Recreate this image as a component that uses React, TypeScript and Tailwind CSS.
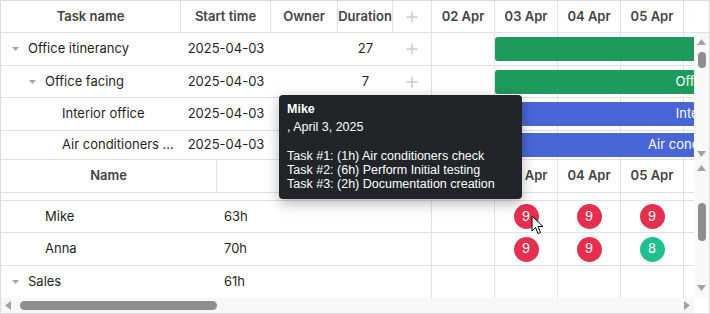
import React from "react";

const line = "border-[#e2e2e2]";

interface TaskRow {
  name: string;
  level: number;
  toggle: boolean;
  start: string;
  duration: string;
  h: string;
  bar: { color: string; width: string; text: string };
}

const tasks: TaskRow[] = [
  { name: "Office itinerancy", level: 0, toggle: true, start: "2025-04-03", duration: "27", h: "h-[33px]", bar: { color: "bg-[#1e9a5c]", width: "w-[1700px]", text: "Office itinerancy" } },
  { name: "Office facing", level: 1, toggle: true, start: "2025-04-03", duration: "7", h: "h-[32px]", bar: { color: "bg-[#1e9a5c]", width: "w-[440px]", text: "Office facing" } },
  { name: "Interior office", level: 2, toggle: false, start: "2025-04-03", duration: "7", h: "h-[33px]", bar: { color: "bg-[#4866d6]", width: "w-[444px]", text: "Interior office" } },
  { name: "Air conditioners ...", level: 2, toggle: false, start: "2025-04-03", duration: "7", h: "h-[29px]", bar: { color: "bg-[#4866d6]", width: "w-[444px]", text: "Air conditioners check" } },
];

const days = ["02 Apr", "03 Apr", "04 Apr", "05 Apr", "06 Apr"];

const Caret = () => (
  <svg width="7" height="4" viewBox="0 0 7 4">
    <polygon points="0,0 7,0 3.5,4" fill="#a6a6a6" />
  </svg>
);

const Plus = () => (
  <svg width="12" height="12" viewBox="0 0 12 12">
    <path d="M6 0.5V11.5M0.5 6H11.5" stroke="#cacaca" strokeWidth="1.5" />
  </svg>
);

const Arrow = ({ dir }: { dir: "up" | "down" | "left" | "right" }) => {
  const pts = {
    up: "0,6 9,6 4.5,0",
    down: "0,0 9,0 4.5,6",
    left: "6,0 6,9 0,4.5",
    right: "0,0 0,9 6,4.5",
  }[dir];
  const vertical = dir === "up" || dir === "down";
  return (
    <svg width={vertical ? 9 : 6} height={vertical ? 6 : 9} viewBox={vertical ? "0 0 9 6" : "0 0 6 9"}>
      <polygon points={pts} fill="#a3a3a3" />
    </svg>
  );
};

const NameCell = ({ level, toggle, text, width }: { level: number; toggle: boolean; text: string; width: string }) => (
  <div className={`${width} h-full flex items-center overflow-hidden whitespace-nowrap`}>
    <div className="shrink-0" style={{ width: 6 + level * 17 }} />
    <div className="w-[16px] shrink-0 flex justify-center">{toggle && <Caret />}</div>
    <span className="ml-[5px]">{text}</span>
  </div>
);

const TimelineCells = ({ children }: { children?: React.ReactNode }) => (
  <div className="relative flex h-full w-[262px] overflow-hidden">
    {days.map((d) => (
      <div key={d} className={`w-[63px] shrink-0 h-full border-r ${line}`} />
    ))}
    {children}
  </div>
);

const Badge = ({ n, color }: { n: string; color: string }) => (
  <div className={`w-[63px] shrink-0 h-full border-r ${line} flex items-center justify-center`}>
    {n && (
      <div className={`w-[25px] h-[25px] rounded-full ${color} text-white flex items-center justify-center text-[13px]`}>
        {n}
      </div>
    )}
  </div>
);

export default function App() {
  return (
    <div className="relative w-[710px] h-[314px] border border-[#dcdcdc] overflow-hidden bg-white font-['Inter',sans-serif] text-[13px] text-[#1f1f1f]">
      {/* tasks area */}
      <div className="flex flex-col h-[159px]">
        <div className={`flex h-[32px] shrink-0 border-b ${line} font-semibold text-[#444]`}>
          <div className={`w-[180px] flex items-center justify-center border-r ${line}`}>Task name</div>
          <div className={`w-[90px] flex items-center justify-center border-r ${line}`}>Start time</div>
          <div className={`w-[67px] flex items-center justify-center border-r ${line}`}>Owner</div>
          <div className={`w-[55px] flex items-center justify-center border-r ${line}`}>Duration</div>
          <div className={`w-[39px] flex items-center justify-center border-r ${line}`}>
            <Plus />
          </div>
          <div className="flex w-[262px] overflow-hidden">
            {days.map((d) => (
              <div key={d} className={`w-[63px] shrink-0 flex items-center justify-center border-r ${line}`}>
                {d}
              </div>
            ))}
          </div>
        </div>
        <div className="flex flex-1">
          <div className="flex flex-col w-[693px]">
            {tasks.map((t) => (
              <div key={t.name} className={`flex ${t.h} shrink-0 border-b ${line}`}>
                <NameCell level={t.level} toggle={t.toggle} text={t.name} width="w-[180px]" />
                <div className="w-[90px] flex items-center justify-center">{t.start}</div>
                <div className="w-[67px]" />
                <div className="w-[55px] flex items-center justify-center">{t.duration}</div>
                <div className={`w-[39px] flex items-center justify-center border-r ${line}`}>
                  <Plus />
                </div>
                <TimelineCells>
                  <div className="absolute inset-y-0 left-[63px] flex items-center">
                    <div className={`${t.bar.width} h-[24px] rounded-[3px] ${t.bar.color} text-white flex items-center justify-center whitespace-nowrap`}>
                      {t.bar.text}
                    </div>
                  </div>
                </TimelineCells>
              </div>
            ))}
          </div>
          <div className="w-[15px] bg-[#f8f8f8] flex flex-col items-center">
            <div className="mt-[6px]"><Arrow dir="up" /></div>
            <div className="mt-[7px] w-[8px] h-[16px] rounded-full bg-[#8e8e8e]" />
            <div className="flex-1" />
            <div className="mb-[3px]"><Arrow dir="down" /></div>
          </div>
        </div>
      </div>

      {/* resources area */}
      <div className="flex h-[138px]">
        <div className="flex flex-col w-[693px]">
          <div className={`flex h-[33px] shrink-0 border-b ${line} font-semibold text-[#444]`}>
            <div className={`w-[216px] flex items-center justify-center border-r ${line}`}>Name</div>
            <div className={`w-[215px] flex items-center justify-center border-r ${line}`}>Workload</div>
            <div className="flex w-[262px] overflow-hidden">
              {days.map((d) => (
                <div key={d} className={`w-[63px] shrink-0 flex items-center justify-center border-r ${line}`}>
                  {d}
                </div>
              ))}
            </div>
          </div>
          <div className={`flex h-[8px] shrink-0 border-b ${line}`}>
            <div className="w-[216px]" />
            <div className={`w-[215px] border-r ${line}`} />
            <TimelineCells />
          </div>
          {[
            { name: "Mike", level: 1, toggle: false, load: "63h", h: "h-[32px]", marks: ["", "9", "9", "9", ""], colors: ["", "bg-[#e4304e]", "bg-[#e4304e]", "bg-[#e4304e]", ""] },
            { name: "Anna", level: 1, toggle: false, load: "70h", h: "h-[33px]", marks: ["", "9", "9", "8", ""], colors: ["", "bg-[#e4304e]", "bg-[#e4304e]", "bg-[#1fbf8e]", ""] },
            { name: "Sales", level: 0, toggle: true, load: "61h", h: "h-[32px]", marks: ["", "", "", "", ""], colors: ["", "", "", "", ""] },
          ].map((r, i) => (
            <div key={r.name} className={`flex ${r.h} shrink-0 ${i < 2 ? `border-b ${line}` : ""}`}>
              <NameCell level={r.level} toggle={r.toggle} text={r.name} width="w-[216px]" />
              <div className={`w-[215px] flex items-center pl-[7px] border-r ${line}`}>{r.load}</div>
              <div className="flex w-[262px] overflow-hidden">
                {r.marks.map((m, j) => (
                  <Badge key={j} n={m} color={r.colors[j]} />
                ))}
              </div>
            </div>
          ))}
        </div>
        <div className="w-[15px] bg-[#f8f8f8] flex flex-col items-center">
          <div className="mt-[5px]"><Arrow dir="up" /></div>
          <div className="mt-[32px] w-[8px] h-[38px] rounded-full bg-[#8e8e8e]" />
          <div className="flex-1" />
          <div className="mb-[7px]"><Arrow dir="down" /></div>
        </div>
      </div>

      {/* horizontal scrollbar */}
      <div className="flex h-[15px]">
        <div className="w-[693px] bg-[#f8f8f8] flex items-center">
          <div className="ml-[4px]"><Arrow dir="left" /></div>
          <div className="ml-[9px] w-[197px] h-[9px] rounded-full bg-[#8e8e8e]" />
          <div className="flex-1" />
          <div className="mr-[4px]"><Arrow dir="right" /></div>
        </div>
        <div className="w-[15px] bg-white" />
      </div>

      {/* tooltip */}
      <div className="absolute left-[278px] top-[94px] w-[243px] h-[104px] rounded-[4px] bg-[#212529] text-white px-[8px] pt-[5px] font-['Liberation_Sans',Arial,sans-serif] text-[12.5px] shadow-[0_4px_14px_rgba(0,0,0,0.3)]">
        <div className="leading-[18px] font-bold">Mike</div>
        <div className="leading-[18px]">, April 3, 2025</div>
        <div className="mt-[13px] leading-[14px]">Task #1: (1h) Air conditioners check</div>
        <div className="leading-[14px]">Task #2: (6h) Perform Initial testing</div>
        <div className="leading-[14px]">Task #3: (2h) Documentation creation</div>
      </div>

      {/* mouse cursor */}
      <svg className="absolute left-[530px] top-[214px]" width="13" height="20" viewBox="0 0 13 20">
        <path d="M1 1 L1 16 L4.5 12.5 L7 18.5 L9.5 17.5 L7 11.5 L12 11.5 Z" fill="white" stroke="black" strokeWidth="1" strokeLinejoin="round" />
      </svg>
    </div>
  );
}
